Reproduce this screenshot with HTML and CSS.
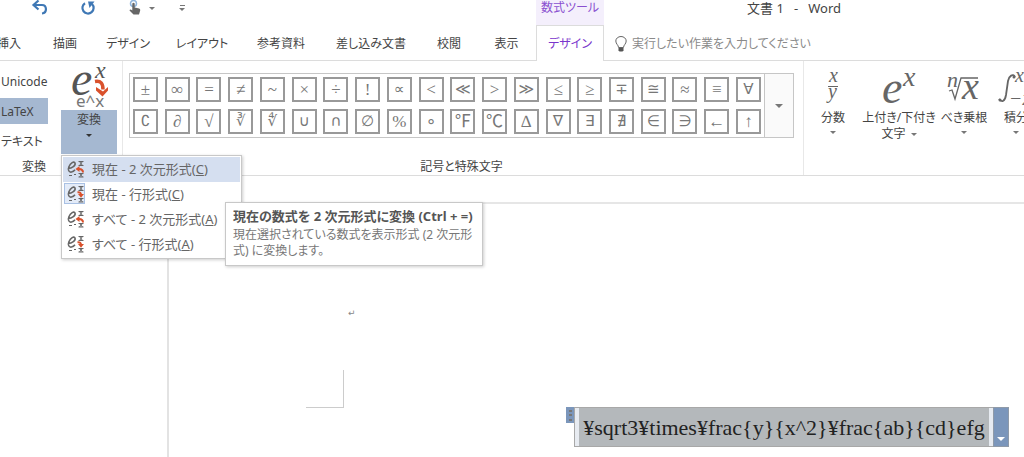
FILE: index.html
```html
<!DOCTYPE html>
<html lang="ja">
<head>
<meta charset="utf-8">
<title>文書 1 - Word</title>
<link rel="stylesheet" href="styles.css">
</head>
<body>
<svg class="defs" width="0" height="0" aria-hidden="true">
  <symbol id="mini-up" viewBox="0 0 18 18">
    <path d="M2 8.500C6 8.500 10 5.500 9 3 8 .8 4.500 3 3 6.500 1.500 10 3 12.500 5.500 12c1.500-.300 2.500-1 3.500-2.200" class="mini-e"/>
    <path d="M12.500 1.500h5M12.500 5.500h5M13.500 1.500l3 4M16.500 1.500l-3 4M12.500 13.500h5M12.500 17h5M13.500 13.500l3 3.500M16.500 13.500l-3 3.500M3 15.500h3M8 14.500h2" class="ink"/>
    <path d="M17 12.500c0-2.500-1-3.500-4-3.500" class="red-line"/><path d="M13.500 6v6L9.500 9z" class="red"/>
  </symbol>
  <symbol id="mini-down" viewBox="0 0 18 18">
    <path d="M2 8.500C6 8.500 10 5.500 9 3 8 .8 4.500 3 3 6.500 1.500 10 3 12.500 5.500 12c1.500-.300 2.500-1 3.500-2.200" class="mini-e"/>
    <path d="M12.500 1.500h5M12.500 5.500h5M13.500 1.500l3 4M16.500 1.500l-3 4M12.500 13.500h5M12.500 17h5M13.500 13.500l3 3.500M16.500 13.500l-3 3.500M3 15.500h3M8 14.500h2" class="ink"/>
    <path d="M11.500 7.200c2.500-.200 3.500 1 3.500 2.800" class="red-line"/><path d="M12 9h6l-3 3.800z" class="red"/>
  </symbol>
</svg>

<header class="titlebar">
  <div class="quick">
    <button class="qbtn" aria-label="元に戻す"><svg width="16" height="16" viewBox="0 0 16 16"><path d="M3 5h7c5 0 5.500 8 0 8.500" fill="none" stroke="#3f78b5" stroke-width="2.200"/><path d="M6.500 .5L1.500 5l5 4.500" fill="none" stroke="#3f78b5" stroke-width="2.200"/></svg></button>
    <button class="qbtn" aria-label="繰り返し"><svg width="16" height="16" viewBox="0 0 16 16"><path d="M5 3.200A5.600 5.600 0 1 0 12 4" fill="none" stroke="#3f78b5" stroke-width="2.200"/><path d="M8 1.500h6.500L9.500 8z" fill="#3f78b5"/></svg></button>
    <button class="qbtn touch" aria-label="タッチ/マウス モードの切り替え"><svg width="14" height="16" viewBox="0 0 14 16"><circle cx="5.500" cy="3.500" r="3" fill="none" stroke="#8fb4dc" stroke-width="1.500"/><path d="M4.300 3.500q1.200-1.500 2.400 0V7.500l4.500 1q1.300.5 1 2L11 14.500H5.500L1.500 10.500q.5-1.800 2.800 0z" fill="#666"/></svg><span class="caret"></span></button>
    <button class="qbtn" aria-label="クイック アクセス ツール バーのユーザー設定"><span class="bar"></span><span class="caret"></span></button>
  </div>
  <div class="context">数式ツール</div>
  <h1 class="doc-title">文書 1 &nbsp;&nbsp;- &nbsp;&nbsp;Word</h1>
</header>

<nav class="tabs">
  <a class="tab first" href="#">挿入</a>
  <a class="tab" href="#">描画</a>
  <a class="tab" href="#">デザイン</a>
  <a class="tab" href="#">レイアウト</a>
  <a class="tab" href="#">参考資料</a>
  <a class="tab" href="#">差し込み文書</a>
  <a class="tab" href="#">校閲</a>
  <a class="tab" href="#">表示</a>
  <a class="tab active" href="#">デザイン</a>
  <label class="tell">
    <svg width="12" height="16" viewBox="0 0 12 16"><path d="M3.500 11.500C3.500 9 .8 8 .8 5a5.200 4.500 0 0 1 10.400 0c0 3-2.700 4-2.700 6.500z" fill="none" stroke="#666"/><path d="M3.500 12h5v2.500l-1 1h-3l-1-1z" fill="#555"/></svg>
    <input type="text" placeholder="実行したい作業を入力してください">
  </label>
</nav>

<main>
<section class="ribbon">
  <div class="group convert">
    <div class="convert-body">
      <div class="formats">
        <button class="format">Unicode</button>
        <button class="format selected">LaTeX</button>
        <button class="format">テキスト</button>
      </div>
      <div class="split">
        <button class="split-icon" aria-label="変換">
          <svg width="46" height="42" viewBox="0 0 46 42"><text x="5" y="28" class="big-e">e</text><text x="29" y="11" class="sup-x">x</text><path d="M29 14.500c6-1 8 2 8 8" fill="none" stroke="#d9512c" stroke-width="3.500"/><path d="M30 20l7 4.500 5-4.500v3.500L36.500 29.500 30 23.500z" fill="#d9512c"/><text x="10" y="40" class="lin">e^x</text></svg>
        </button>
        <button class="split-label">変換<span class="caret dark"></span></button>
        <div class="menu">
          <button class="item hot"><span class="ico"><svg width="18" height="18"><use href="#mini-up"/></svg></span><span>現在 - 2 次元形式(<u>C</u>)</span></button>
          <button class="item"><span class="ico on"><svg width="18" height="18"><use href="#mini-down"/></svg></span><span>現在 - 行形式(<u>C</u>)</span></button>
          <button class="item"><span class="ico"><svg width="18" height="18"><use href="#mini-up"/></svg></span><span>すべて - 2 次元形式(<u>A</u>)</span></button>
          <button class="item"><span class="ico"><svg width="18" height="18"><use href="#mini-down"/></svg></span><span>すべて - 行形式(<u>A</u>)</span></button>
          <div class="tooltip" role="tooltip"><strong>現在の数式を 2 次元形式に変換 (Ctrl + =)</strong><p>現在選択されている数式を表示形式 (2 次元形式) に変換します。</p></div>
        </div>
      </div>
    </div>
    <div class="group-name shifted">変換</div>
  </div>

  <div class="group symbols">
    <div class="gallery">
      <div class="tiles">
        <button>±</button><button>∞</button><button>=</button><button>≠</button><button>~</button><button>×</button><button>÷</button><button>!</button><button class="sym">∝</button><button>&lt;</button><button class="sym">≪</button><button>&gt;</button><button class="sym">≫</button><button>≤</button><button>≥</button><button class="sym">∓</button><button class="sym">≅</button><button>≈</button><button>≡</button><button class="sym">∀</button>
        <button class="sym">∁</button><button>∂</button><button>√</button><button class="sym">∛</button><button class="sym">∜</button><button class="sym">∪</button><button class="sym">∩</button><button class="sym">∅</button><button>%</button><button>∘</button><button>℉</button><button>℃</button><button>∆</button><button class="sym">∇</button><button class="sym">∃</button><button class="sym">∄</button><button class="sym">∈</button><button class="sym">∋</button><button>←</button><button>↑</button>
      </div>
      <button class="more" aria-label="その他"><span class="caret"></span></button>
    </div>
    <div class="group-name">記号と特殊文字</div>
  </div>

  <div class="group structures">
    <button class="struct"><svg width="40" height="42" viewBox="0 0 40 42"><text x="16" y="14" class="m18">x</text><path d="M15 18.500h10" class="rule"/><text x="15" y="30" class="m18">y</text></svg><span>分数</span><span class="caret"></span></button>
    <button class="struct wide"><svg width="40" height="42" viewBox="0 0 40 42"><text x="3" y="35" class="m42">e</text><text x="24" y="18" class="m24">x</text></svg><span>上付き/下付き</span><span>文字<span class="caret inline"></span></span></button>
    <button class="struct third"><svg width="40" height="42" viewBox="0 0 40 42"><text x="3" y="19" class="m22">n</text><path d="M5 23l3-1 3 9 6-21h17" fill="none" stroke="#666" stroke-width="1.300"/><text x="18" y="31" class="m34">x</text></svg><span>べき乗根</span><span class="caret"></span></button>
    <button class="struct last"><svg width="40" height="42" viewBox="0 0 40 42"><path d="M19 9c-2-4-6-1-7 4L10 27c-1 6-4 8-7 4" fill="none" stroke="#666" stroke-width="1.800"/><circle cx="18" cy="9" r="1.500" fill="#666"/><circle cx="4" cy="32" r="1.500" fill="#666"/><text x="19" y="14" class="m18">x</text><text x="13" y="37" class="m18">−x</text></svg><span>積分</span><span class="caret"></span></button>
  </div>
</section>

<div class="ruler"></div>

<section class="workspace">
  <div class="page">
    <span class="return">↵</span>
    <span class="corner"></span>
    <div class="equation">
      <span class="handle"><i></i><i></i><i></i></span>
      <div class="math">¥sqrt3¥times¥frac{y}{x^2}¥frac{ab}{cd}efg</div>
      <button class="options" aria-label="数式オプション"><span class="caret white"></span></button>
    </div>
  </div>
</section>
</main>
</body>
</html>
```
FILE: styles.css
```css
* { box-sizing: border-box; }
body {
  margin: 0;
  background: #fff;
  color: #444;
  font: 12px/16px "Noto Sans", "Noto Sans CJK JP", sans-serif;
  font-feature-settings: "palt";
  overflow: hidden;
}
main { display: block; }
button {
  font: inherit;
  font-feature-settings: inherit;
  color: inherit;
  background: none;
  border: 0;
  padding: 0;
}
svg { overflow: visible; }
.defs { display: none; }

.caret {
  display: block;
  width: 0;
  height: 0;
  border: 3px solid transparent;
  border-top-color: #777;
  border-bottom: 0;
}
.caret.dark { border-top-color: #333; }
.caret.white { border-width: 4px; border-bottom: 0; border-top-color: #fff; }
.caret.inline { display: inline-block; margin-left: 5px; vertical-align: middle; }

.titlebar {
  display: grid;
  grid-template-columns: 536px 68px 1fr;
  height: 25px;
}
.quick { display: flex; gap: 32px; padding-left: 32px; height: 16px; }
.qbtn { display: flex; align-items: center; }
.qbtn.touch { gap: 7px; }
.qbtn:last-child { flex-direction: column; justify-content: center; gap: 2px; margin-left: -8px; }
.bar { width: 5px; height: 1px; background: #777; }
.context { background: #f4effc; color: #8a4fd0; text-align: center; }
.doc-title { margin: 0 0 0 143px; font-size: 13px; font-weight: 400; line-height: 16px; }

.tabs {
  display: grid;
  grid-template-columns: 37px 56px 70px 78px 80px 100px 56px 59px 68px 1fr;
  height: 36px;
}
.tab {
  display: flex;
  align-items: center;
  justify-content: center;
  padding-top: 2px;
  border-bottom: 1px solid #dcdcdc;
  color: #444;
  text-decoration: none;
  white-space: nowrap;
}
.tab.first { justify-content: flex-end; padding-right: 16px; }
.tab.active { padding-top: 0; border: 1px solid #dcdcdc; border-bottom: 0; color: #7a35cc; }
.tell {
  display: flex;
  align-items: center;
  gap: 5px;
  padding: 2px 0 0 11px;
  border-bottom: 1px solid #dcdcdc;
}
.tell input {
  flex: 1;
  border: 0;
  outline: 0;
  padding: 0;
  background: none;
  font: inherit;
  font-feature-settings: inherit;
}
.tell input::placeholder { color: #8a8a8a; }

.ribbon {
  display: grid;
  grid-template-columns: 122px minmax(0, 1fr) 220px;
  height: 115px;
  border-bottom: 1px solid #dcdcdc;
}
.group { display: flex; flex-direction: column; justify-content: space-between; }
.group-name { text-align: center; line-height: 16px; }
.group-name.shifted { padding-left: 22px; text-align: left; }
.convert-body { display: flex; justify-content: space-between; padding: 6px 5px 0 0; }
.formats { width: 48px; padding-top: 1px; }
.format { display: block; width: 100%; height: 26px; margin-bottom: 4px; padding: 1px 0 0 1px; text-align: left; }
.format.selected { background: #a5b8d1; }
.split { position: relative; width: 56px; }
.split-icon { display: flex; justify-content: center; width: 56px; height: 43px; }
.split-label {
  display: flex;
  flex-direction: column;
  align-items: center;
  gap: 6px;
  width: 56px;
  height: 44px;
  padding-top: 2px;
  background: #a5b8d1;
}
.big-e { font: italic 48px "Liberation Serif", serif; fill: #555; }
.sup-x { font: italic 24px "Liberation Serif", serif; fill: #555; }
.lin { font: 17px "Noto Sans", sans-serif; fill: #777; }
.mini-e { fill: none; stroke: #666; stroke-width: 1.6; }
.ink { fill: none; stroke: #666; stroke-width: 1; }
.rule { stroke: #666; stroke-width: 1; }
.red { fill: #d9512c; }
.red-line { fill: none; stroke: #d9512c; stroke-width: 2; }

.menu {
  position: absolute;
  z-index: 2;
  top: 88px;
  left: 0;
  width: 181px;
  padding: 1px;
  background: #fff;
  border: 1px solid #c8c8c8;
  box-shadow: 1px 1px 3px #0003;
  color: #666;
  font-size: 13px;
}
.item { display: flex; align-items: center; gap: 7px; width: 100%; height: 25px; padding: 0 0 2px 1px; white-space: nowrap; }
.item.hot { background: #d5dff0; }
.ico { display: flex; align-items: center; justify-content: center; width: 21px; height: 21px; border: 1px solid transparent; }
.ico.on { border-color: #a9c1e4; background: #e3ebf8; }
.tooltip {
  position: absolute;
  top: 46px;
  left: 163px;
  width: 258px;
  padding: 5px 7px 6px;
  background: #fff;
  border: 1px solid #c8c8c8;
  box-shadow: 1px 1px 3px #0003;
  font-size: 12px;
}
.tooltip strong { display: block; margin-bottom: 3px; color: #555; font-size: 13px; white-space: nowrap; }
.tooltip p { margin: 0; color: #777; }

.symbols { padding: 12px 9px 0 6px; border-left: 1px solid #e8e8e8; border-right: 1px solid #e8e8e8; }
.gallery { display: flex; height: 65px; border: 1px solid #c6c6c6; }
.tiles {
  flex: 1;
  display: grid;
  grid-template-columns: repeat(20, 25px);
  grid-auto-rows: 25px;
  justify-content: space-between;
  row-gap: 7px;
  padding: 3px;
}
.tiles button {
  border: 2px solid #999;
  color: #777;
  font: 17px/19px "Liberation Serif", "Noto Sans CJK JP", "DejaVu Sans", serif;
  text-align: center;
}
.tiles .sym { font: 15px/19px "DejaVu Sans", sans-serif; }
.more { display: flex; align-items: center; justify-content: center; width: 29px; border-left: 1px solid #c6c6c6; background: #fafafa; }
.more .caret { border-width: 4px; border-bottom: 0; }

.structures { flex-direction: row; justify-content: flex-start; }
.struct { display: flex; flex: 0 0 auto; flex-direction: column; align-items: center; width: 58px; padding-top: 7px; white-space: nowrap; }
.struct.wide { width: 74px; }
.struct.third { width: 56px; }
.struct.last { width: 48px; }
.struct > .caret { margin-top: 5px; }
.struct svg { flex: none; }
.m18, .m22, .m24, .m34, .m42 { font-family: "Liberation Serif", serif; font-style: italic; fill: #666; }
.m18 { font-size: 20px; }
.m22 { font-size: 22px; }
.m24 { font-size: 28px; }
.m34 { font-size: 38px; }
.m42 { font-size: 46px; }

.ruler { height: 28px; margin-left: 167px; border-bottom: 2px solid #e6e6e6; }
.workspace { height: 253px; padding-left: 167px; }
.page { position: relative; height: 100%; border-left: 2px solid #e3e3e3; }
.return { position: absolute; left: 179px; top: 101px; font: 9px/16px "DejaVu Sans", sans-serif; color: #888; }
.corner { position: absolute; left: 137px; top: 166px; width: 38px; height: 38px; border: solid #ccc; border-width: 0 1px 1px 0; }
.equation { position: absolute; left: 397px; top: 203px; display: flex; height: 40px; }
.handle { display: flex; flex-direction: column; align-items: center; justify-content: space-evenly; width: 8px; height: 16px; background: #7b96bb; }
.handle i { width: 3px; height: 2px; background: #777; }
.math {
  min-width: 419px;
  padding: 0 5px;
  border: 1px solid #a8a8a8;
  border-right: 0;
  background: #b4b8bb;
  box-shadow: inset 4px 0 #e7ebf1, inset -4px 0 #e7ebf1;
  color: #222;
  font: 22px/40px "Liberation Serif", serif;
  text-align: center;
  white-space: nowrap;
}
.options { display: flex; align-items: flex-end; justify-content: center; width: 16px; padding-bottom: 5px; background: #7b96bb; border: 1px solid #8f9aa8; }
```
